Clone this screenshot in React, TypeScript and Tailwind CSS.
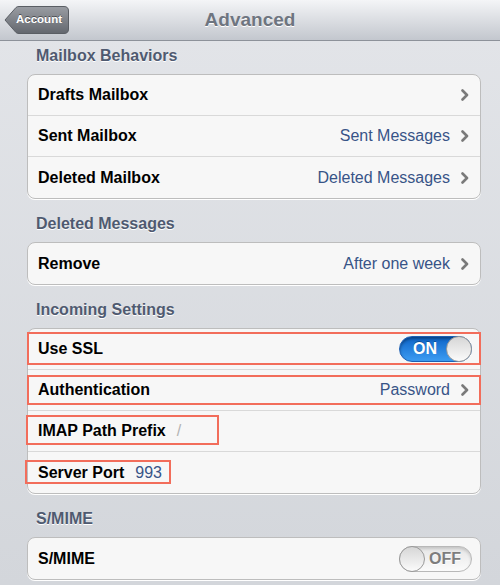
import type { ReactNode } from "react"

const font = { fontFamily: '"Liberation Sans", Arial, sans-serif' }

function Chevron() {
  return (
    <svg width="8" height="12" viewBox="0 0 8 12" className="ml-[11px] shrink-0">
      <path d="M1.5 1.5 L6 6 L1.5 10.5" fill="none" stroke="#7a7a7a" strokeWidth="2.6" strokeLinecap="round" strokeLinejoin="round" />
    </svg>
  )
}

function Switch({ on }: { on: boolean }) {
  if (on) {
    return (
      <div className="relative flex h-[26px] w-[73px] items-center rounded-full border border-[#1c5fb3] bg-gradient-to-b from-[#0b64c8] to-[#3c9cf2] shadow-[inset_0_2px_3px_rgba(0,0,0,0.35)]">
        <span className="ml-[13px] text-[16px] font-bold text-white [text-shadow:0_-1px_0_rgba(0,0,0,0.3)]">ON</span>
        <div className="absolute right-[-1px] top-[-1px] h-[26px] w-[26px] rounded-full border border-[#9a9a9a] bg-gradient-to-b from-[#d6d6d6] to-[#fbfbfb]" />
      </div>
    )
  }
  return (
    <div className="relative flex h-[26px] w-[73px] items-center justify-end rounded-full border border-[#b8b8b8] bg-gradient-to-b from-[#e6e6e6] to-[#fbfbfb] shadow-[inset_0_2px_3px_rgba(0,0,0,0.15)]">
      <span className="mr-[10px] text-[16px] font-bold text-[#7d7d7d] [text-shadow:0_1px_0_#fff]">OFF</span>
      <div className="absolute left-[-1px] top-[-1px] h-[26px] w-[26px] rounded-full border border-[#9a9a9a] bg-gradient-to-b from-[#d6d6d6] to-[#fbfbfb]" />
    </div>
  )
}

function Row({ label, value, inline, inlineColor, chevron, right, last, children }: {
  label: string
  value?: string
  inline?: string
  inlineColor?: string
  chevron?: boolean
  right?: ReactNode
  last?: boolean
  children?: ReactNode
}) {
  return (
    <div className={`relative flex h-[41px] items-center pl-[10px] ${right ? "pr-[8px]" : "pr-[11px]"} ${last ? "" : "border-b border-[#d9d9d9]"}`}>
      <span className="text-[16px] font-bold text-black">{label}</span>
      {inline && <span className={`ml-[11px] text-[16px] ${inlineColor}`}>{inline}</span>}
      <div className="ml-auto flex items-center">
        {value && <span className="text-[16px] text-[#385487]">{value}</span>}
        {chevron && <Chevron />}
        {right}
      </div>
      {children}
    </div>
  )
}

function Group({ children }: { children: ReactNode }) {
  return (
    <div className="mx-[27px] w-[454px] rounded-[8px] border border-[#bdbdbd] bg-[#f7f7f7] shadow-[0_1px_0_#fff]">
      {children}
    </div>
  )
}

function Header({ text, first }: { text: string; first?: boolean }) {
  return (
    <div className={`${first ? "mt-[4px]" : "mt-[14px]"} mb-[7px] h-[22px] pl-[36px] text-[16px] font-bold leading-[22px] text-[#4f5a70] [text-shadow:0_1px_0_#fff]`}>
      {text}
    </div>
  )
}

// red annotation boxes drawn over the rows
function Mark({ className }: { className: string }) {
  return <div className={`pointer-events-none absolute border-2 border-[#f26d5b] ${className}`} />
}

export default function App() {
  return (
    <div style={font} className="h-[585px] w-[500px] overflow-hidden bg-gradient-to-b from-[#e3e5e9] to-[#d3d6db]">
      <div className="relative flex h-[41px] items-center justify-center border-b border-[#8d929a] bg-gradient-to-b from-[#f4f5f7] to-[#c3c7ce]">
        <div className="absolute left-[4px] top-[6px] flex h-[28px] w-[65px] items-center">
          <svg width="65" height="28" viewBox="0 0 65 28" className="absolute inset-0">
            <defs>
              <linearGradient id="bk" x1="0" y1="0" x2="0" y2="1">
                <stop offset="0" stopColor="#9a9da3" />
                <stop offset="1" stopColor="#63676e" />
              </linearGradient>
            </defs>
            <path d="M1 14 L12 1.5 Q13 0.5 15 0.5 L60 0.5 Q64.5 0.5 64.5 5 L64.5 23 Q64.5 27.5 60 27.5 L15 27.5 Q13 27.5 12 26.5 Z" fill="url(#bk)" stroke="#5a5e64" strokeWidth="1" />
          </svg>
          <span className="relative ml-[12px] text-[11.5px] font-bold text-white [text-shadow:0_-1px_0_rgba(0,0,0,0.45)]">Account</span>
        </div>
        <span className="mt-[1px] text-[19px] font-bold text-[#6e7580] [text-shadow:0_1px_0_#fff]">Advanced</span>
      </div>

      <Header text="Mailbox Behaviors" first />
      <Group>
        <Row label="Drafts Mailbox" chevron />
        <Row label="Sent Mailbox" value="Sent Messages" chevron />
        <Row label="Deleted Mailbox" value="Deleted Messages" chevron last />
      </Group>

      <Header text="Deleted Messages" />
      <Group>
        <Row label="Remove" value="After one week" chevron last />
      </Group>

      <Header text="Incoming Settings" />
      <Group>
        <Row label="Use SSL" right={<Switch on />}>
          <Mark className="left-[-1px] right-[-1px] top-[3px] h-[33px]" />
        </Row>
        <Row label="Authentication" value="Password" chevron>
          <Mark className="left-[-1px] right-[-1px] top-[5px] h-[30px]" />
        </Row>
        <Row label="IMAP Path Prefix" inline="/" inlineColor="text-[#b3b3b3]">
          <Mark className="left-[-2px] top-[4px] h-[30px] w-[193px]" />
        </Row>
        <Row label="Server Port" inline="993" inlineColor="text-[#385487]" last>
          <Mark className="left-[-3px] top-[8px] h-[24px] w-[146px]" />
        </Row>
      </Group>

      <Header text="S/MIME" />
      <Group>
        <Row label="S/MIME" right={<Switch on={false} />} last />
      </Group>
    </div>
  )
}
